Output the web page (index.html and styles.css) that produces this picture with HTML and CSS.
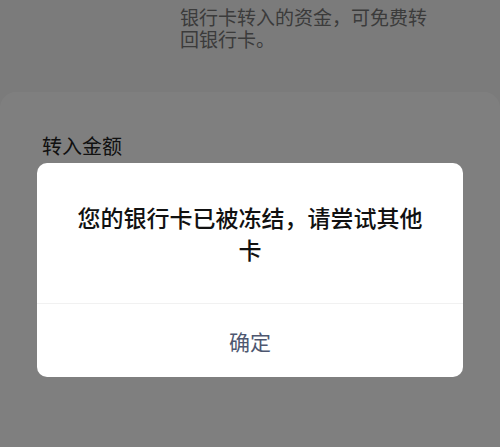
FILE: index.html
```html
<!DOCTYPE html>
<html lang="zh-CN">
<head>
<meta charset="utf-8">
<title>转入</title>
<link rel="stylesheet" href="styles.css">
</head>
<body>
<div class="page">
  <div class="top">
    <p class="note">银行卡转入的资金，可免费转回银行卡。</p>
  </div>
  <div class="sheet">
    <div class="label">转入金额</div>
  </div>
</div>
<div class="overlay">
  <div class="dialog">
    <div class="msg">您的银行卡已被冻结，请尝试其他卡</div>
    <div class="btn">确定</div>
  </div>
</div>
</body>
</html>
```

FILE: styles.css
```css
html, body {
  margin: 0;
  padding: 0;
}
body {
  width: 500px;
  height: 447px;
  overflow: hidden;
  background: #f6f6f6;
  font-family: "Noto Sans CJK SC", "Noto Sans", sans-serif;
  position: relative;
}
.page {
  display: flex;
  flex-direction: column;
  height: 447px;
}
.top {
  height: 92px;
  padding-left: 180px;
  box-sizing: border-box;
  padding-top: 6px;
}
.note {
  margin: 0;
  width: 250px;
  font-size: 19px;
  line-height: 22px;
  color: #767676;
}
.sheet {
  flex: 1;
  background: #ffffff;
  border-radius: 16px 16px 0 0;
  padding: 42px 0 0 42px;
}
.label {
  font-size: 20px;
  line-height: 24px;
  color: #222;
}
.overlay {
  position: absolute;
  inset: 0;
  background: rgba(0, 0, 0, 0.5);
  display: flex;
  justify-content: center;
  align-items: flex-start;
  padding-top: 163px;
}
.dialog {
  width: 426px;
  background: #fff;
  border-radius: 10px;
  overflow: hidden;
}
.msg {
  height: 141px;
  box-sizing: border-box;
  padding: 0 36px;
  display: flex;
  align-items: center;
  justify-content: center;
  text-align: center;
  font-size: 23px;
  font-weight: 500;
  line-height: 32px;
  color: #111;
  border-bottom: 1px solid #f1f1f1;
}
.btn {
  height: 73px;
  display: flex;
  align-items: center;
  justify-content: center;
  font-size: 21px;
  color: #4e5770;
}
```
